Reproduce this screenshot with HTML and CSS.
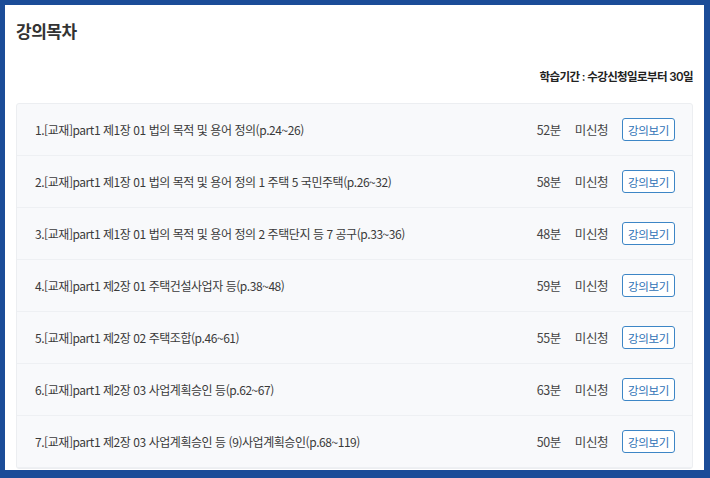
FILE: index.html
```html
<!DOCTYPE html>
<html lang="ko">
<head>
    <meta charset="UTF-8">
    <title>강의목차</title>
    <link rel="stylesheet" href="styles.css">
</head>
<body>
    <div class="frame">
        <h2 class="title">강의목차</h2>
        <p class="period">학습기간 : 수강신청일로부터 30일</p>

        <!-- Lecture list -->
        <ul class="lectures">
            <li class="lecture">
                <span class="name">1.[교재]part1 제1장 01 법의 목적 및 용어 정의(p.24~26)</span>
                <span class="time">52분</span>
                <span class="state">미신청</span>
                <button class="view">강의보기</button>
            </li>
            <li class="lecture">
                <span class="name">2.[교재]part1 제1장 01 법의 목적 및 용어 정의 1 주택 5 국민주택(p.26~32)</span>
                <span class="time">58분</span>
                <span class="state">미신청</span>
                <button class="view">강의보기</button>
            </li>
            <li class="lecture">
                <span class="name">3.[교재]part1 제1장 01 법의 목적 및 용어 정의 2 주택단지 등 7 공구(p.33~36)</span>
                <span class="time">48분</span>
                <span class="state">미신청</span>
                <button class="view">강의보기</button>
            </li>
            <li class="lecture">
                <span class="name">4.[교재]part1 제2장 01 주택건설사업자 등(p.38~48)</span>
                <span class="time">59분</span>
                <span class="state">미신청</span>
                <button class="view">강의보기</button>
            </li>
            <li class="lecture">
                <span class="name">5.[교재]part1 제2장 02 주택조합(p.46~61)</span>
                <span class="time">55분</span>
                <span class="state">미신청</span>
                <button class="view">강의보기</button>
            </li>
            <li class="lecture">
                <span class="name">6.[교재]part1 제2장 03 사업계획승인 등(p.62~67)</span>
                <span class="time">63분</span>
                <span class="state">미신청</span>
                <button class="view">강의보기</button>
            </li>
            <li class="lecture">
                <span class="name">7.[교재]part1 제2장 03 사업계획승인 등 (9)사업계획승인(p.68~119)</span>
                <span class="time">50분</span>
                <span class="state">미신청</span>
                <button class="view">강의보기</button>
            </li>
        </ul>
    </div>
</body>
</html>
```

FILE: styles.css
```css
/* Page frame */
html, body {
    margin: 0;
    padding: 0;
    height: 100%;
    overflow: hidden;
}

body {
    font-family: Inter, "Noto Sans CJK KR", sans-serif;
    color: #333;
    background-color: #1b4c98;
}

.frame {
    margin: 5px 6px 0 5px;
    height: 465px;
    background-color: #fff;
    padding: 0 11px;
    overflow: hidden;
    box-sizing: border-box;
}

.title {
    margin: 0;
    padding-top: 15px;
    font-size: 17px;
    font-weight: 700;
    line-height: 24px;
    color: #333;
    letter-spacing: -0.5px;
}

.period {
    margin: 25px 0 0;
    text-align: right;
    font-size: 11.5px;
    font-weight: 600;
    line-height: 16px;
    color: #222;
    letter-spacing: -0.6px;
}

/* Lecture list */
.lectures {
    list-style: none;
    margin: 18px 0 0;
    padding: 0;
    border: 1px solid #eceef1;
    border-radius: 3px;
    background-color: #f8f9fb;
}

.lecture {
    display: flex;
    align-items: center;
    height: 51px;
    padding: 0 17px 0 18px;
    border-bottom: 1px solid #eef0f3;
    font-family: "Noto Sans CJK KR", sans-serif;
    font-size: 12px;
    line-height: 18px;
    letter-spacing: -0.45px;
}

.name {
    flex: 1;
    color: #3a3a3a;
}

.time {
    font-size: 12.5px;
    color: #444;
}

.state {
    margin-left: 14px;
    font-size: 12.5px;
    color: #444;
}

.view {
    margin-left: 14px;
    height: 23px;
    width: 53px;
    padding: 0;
    border: 1px solid #3d86c6;
    border-radius: 3px;
    background-color: #fff;
    color: #2f72b6;
    font-family: inherit;
    font-size: 11.5px;
    letter-spacing: -0.3px;
    cursor: pointer;
}
```
